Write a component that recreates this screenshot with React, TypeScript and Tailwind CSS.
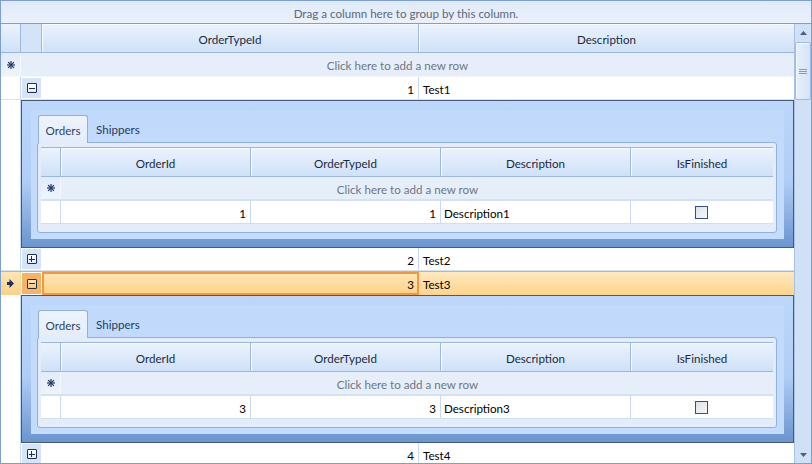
import React from "react";

const FONT = { fontFamily: 'Lato, "Noto Sans", sans-serif' };

function Star() {
  return (
    <svg width="8" height="8" viewBox="0 0 8 8">
      <g stroke="#1f3a6b" strokeWidth="1.2" strokeLinecap="square">
        <line x1="4" y1="0.5" x2="4" y2="7.5" />
        <line x1="0.5" y1="4" x2="7.5" y2="4" />
        <line x1="1.5" y1="1.5" x2="6.5" y2="6.5" />
        <line x1="6.5" y1="1.5" x2="1.5" y2="6.5" />
      </g>
      <rect x="3" y="3" width="2" height="2" fill="#1f3a6b" />
    </svg>
  );
}

function Arrow() {
  return (
    <svg width="7" height="9" viewBox="0 0 7 9">
      <polygon points="0,3 2.5,3 2.5,0 7,4.5 2.5,9 2.5,6 0,6" fill="#1d3461" />
    </svg>
  );
}

function ExpandBox({ plus, selected }: { plus?: boolean; selected?: boolean }) {
  return (
    <div
      className={
        "w-[10px] h-[10px] border border-[#1e2f52] rounded-[1px] flex items-center justify-center relative " +
        (selected
          ? "bg-[linear-gradient(to_bottom,#fde7b8,#fbc77a)]"
          : "bg-[linear-gradient(to_bottom,#ffffff,#e3ecf8)]")
      }
    >
      <div className="w-[6px] h-[1px] bg-[#1e2f52]" />
      {plus && <div className="absolute w-[1px] h-[6px] bg-[#1e2f52]" />}
    </div>
  );
}

function ExpandCell({ plus, selected }: { plus?: boolean; selected?: boolean }) {
  return (
    <div
      className={
        "w-[21px] h-full shrink-0 flex items-center justify-center border border-white " +
        (selected ? "bg-[#f9b461]" : "bg-[#d5e4f7]")
      }
    >
      <ExpandBox plus={plus} selected={selected} />
    </div>
  );
}

function HeaderCell({
  w,
  children,
  last,
}: {
  w?: string;
  children?: React.ReactNode;
  last?: boolean;
}) {
  return (
    <div
      className={
        (w ? w + " shrink-0 " : "flex-1 ") +
        "h-full flex items-center justify-center pt-[3px] text-[#1b2a40] bg-[linear-gradient(to_bottom,#ebf3fd,#cfe1f8)] shadow-[inset_1px_1px_0_#f7fbff] " +
        (last ? "" : "border-r border-[#9fb9dc]")
      }
    >
      {children}
    </div>
  );
}

function MainRow({
  n,
  text,
  plus,
}: {
  n: number;
  text: string;
  plus?: boolean;
}) {
  return (
    <div className="flex h-[23px] shrink-0 border-b border-[#d3e2f4] bg-white">
      <div className="w-[20px] shrink-0 border-r border-[#c7daf1] bg-white" />
      <ExpandCell plus={plus} />
      <div className="w-[377px] shrink-0 border-r border-[#c7daf1] flex items-center justify-end pr-[4px] pt-[3px] text-black">
        {n}
      </div>
      <div className="flex-1 flex items-center pl-[4px] pt-[3px] text-black">{text}</div>
    </div>
  );
}

function SelectedRow() {
  return (
    <div className="flex h-[24px] shrink-0 border-t border-[#f7a851] bg-[linear-gradient(to_bottom,#fee8bd,#fdd48c)]">
      <div className="w-[20px] shrink-0 border-r border-[#f3d9a8] bg-[linear-gradient(to_bottom,#fde7b6,#fcd086)] flex items-center justify-center">
        <Arrow />
      </div>
      <ExpandCell selected />
      <div className="w-[377px] shrink-0 border-2 border-[#f6963f] flex items-center justify-end pr-[3px] pt-[3px] text-black bg-[linear-gradient(to_bottom,#fee5b3,#fdd38b)]">
        3
      </div>
      <div className="flex-1 flex items-center pl-[4px] pt-[3px] text-black">Test3</div>
    </div>
  );
}

function Checkbox() {
  return (
    <div className="w-[13px] h-[13px] border border-[#34507a] bg-[linear-gradient(135deg,#dde1e8,#f6f7f9)]" />
  );
}

function Detail({ n }: { n: number }) {
  const cols = ["OrderId", "OrderTypeId", "Description", "IsFinished"];
  return (
    <div className="flex h-[148px] shrink-0">
      <div className="w-[20px] shrink-0 border-r border-[#c7daf1] bg-white" />
      <div className="flex-1 border border-[#45597c] bg-[linear-gradient(to_bottom,#bcd7fa,#b0cdf4_55%,#6a95cf)] pt-[9px] pl-[9px] pr-[9px] pb-[8px]">
        <div className="h-full bg-[linear-gradient(to_bottom,#c1dafc,#c4dcfb)] pt-[5px] pl-[6px] pr-[7px] pb-[6px] flex flex-col">
          <div className="flex h-[27px] shrink-0 relative z-10">
            <div className="ml-[1px] w-[50px] h-[28px] border border-b-0 border-[#8fb1e0] rounded-t-[3px] bg-[linear-gradient(to_bottom,#eef4fd,#e3ecf9)] flex items-center justify-center pt-[3px] text-[#2c4468]">
              Orders
            </div>
            <div className="px-[8px] flex items-center pt-[3px] text-[#1f3a62]">Shippers</div>
          </div>
          <div className="h-[91px] shrink-0 border border-[#8fb1e0] rounded-[3px] bg-[#e4ecf9] pt-[4px] px-[3px] pb-[8px]">
            <div className="flex flex-col">
              <div className="flex h-[30px] border-t border-b border-[#9bb7de]">
                <div className="w-[20px] shrink-0 h-full bg-[linear-gradient(to_bottom,#ebf3fd,#cfe1f8)] border-r border-[#9fb9dc]" />
                <HeaderCell w="w-[190px]">{cols[0]}</HeaderCell>
                <HeaderCell w="w-[190px]">{cols[1]}</HeaderCell>
                <HeaderCell w="w-[190px]">{cols[2]}</HeaderCell>
                <HeaderCell last>{cols[3]}</HeaderCell>
              </div>
              <div className="flex h-[24px] border-b-2 border-[#d2e1f4] bg-[#e6eef9] relative">
                <div className="w-[20px] shrink-0 h-full bg-[linear-gradient(to_bottom,#e1ebf9,#eef4fc)] border-r border-[#f4f8fd] flex items-center justify-center">
                  <Star />
                </div>
                <div className="flex-1 flex items-center justify-center pr-[19px] pt-[3px] text-[#6d7785]">
                  Click here to add a new row
                </div>
              </div>
              <div className="flex h-[23px] border-b border-[#cfdff2] bg-white">
                <div className="w-[20px] shrink-0 border-r border-[#c7daf1]" />
                <div className="w-[190px] shrink-0 border-r border-[#c7daf1] flex items-center justify-end pr-[4px] pt-[3px] text-black">
                  {n}
                </div>
                <div className="w-[190px] shrink-0 border-r border-[#c7daf1] flex items-center justify-end pr-[4px] pt-[3px] text-black">
                  {n}
                </div>
                <div className="w-[190px] shrink-0 border-r border-[#c7daf1] flex items-center pl-[3px] pt-[3px] text-black">
                  Description{n}
                </div>
                <div className="flex-1 flex items-center justify-center pr-[1px]">
                  <Checkbox />
                </div>
              </div>
            </div>
          </div>
        </div>
      </div>
    </div>
  );
}

function ScrollBar() {
  return (
    <div className="w-[17px] shrink-0 h-full border-l border-[#a9c1e2] bg-[#d1e1f5] flex flex-col">
      <div className="h-[17px] shrink-0 flex items-center justify-center">
        <svg width="7" height="4" viewBox="0 0 7 4">
          <polygon points="0,4 3.5,0 7,4" fill="#4a5d7f" />
        </svg>
      </div>
      <div className="mt-[1px] h-[58px] shrink-0 border border-[#9fb9df] rounded-[2px] bg-[linear-gradient(to_right,#e6effb,#d5e4f7)] shadow-[inset_1px_1px_0_#f3f8fe] flex flex-col items-center justify-center gap-[1px]">
        <div className="w-[8px] h-[1px] bg-[#7f9bd0]" />
        <div className="w-[8px] h-[1px] bg-[#7f9bd0]" />
        <div className="w-[8px] h-[1px] bg-[#7f9bd0]" />
      </div>
      <div className="flex-1" />
      <div className="h-[17px] shrink-0 flex items-center justify-center">
        <svg width="7" height="4" viewBox="0 0 7 4">
          <polygon points="0,0 7,0 3.5,4" fill="#4a5d7f" />
        </svg>
      </div>
    </div>
  );
}

export default function App() {
  return (
    <div
      className="w-[812px] h-[464px] border border-[#7c9fd3] bg-white flex flex-col overflow-hidden text-[11.6px] leading-none"
      style={FONT}
    >
      <div className="h-[23px] shrink-0 border-b border-[#7c9fd3] bg-[linear-gradient(to_bottom,#e0eaf8,#eaf1fb)] flex items-center justify-center pt-[3px] text-[#5b6980]">
        Drag a column here to group by this column.
      </div>
      <div className="flex flex-1 min-h-0">
        <div className="flex-1 flex flex-col min-w-0 overflow-hidden">
          <div className="flex h-[29px] shrink-0 border-b border-[#9bb6dc]">
            <div className="w-[20px] shrink-0 h-full bg-[linear-gradient(to_bottom,#ebf3fd,#cfe1f8)] border-r border-[#9fb9dc]" />
            <div className="w-[21px] shrink-0 h-full bg-[#d4e4f8] border-r border-[#9fb9dc]" />
            <HeaderCell w="w-[377px]">OrderTypeId</HeaderCell>
            <HeaderCell last>Description</HeaderCell>
          </div>
          <div className="flex h-[24px] shrink-0 border-b border-[#f4f8fd] bg-[#e6eef9]">
            <div className="w-[20px] shrink-0 h-full bg-[linear-gradient(to_bottom,#e1ebf9,#eef4fc)] border-r border-[#f4f8fd] flex items-center justify-center">
              <Star />
            </div>
            <div className="flex-1 flex items-center justify-center pr-[20px] pt-[3px] text-[#6d7785]">
              Click here to add a new row
            </div>
          </div>
          <MainRow n={1} text="Test1" />
          <Detail n={1} />
          <MainRow n={2} text="Test2" plus />
          <SelectedRow />
          <Detail n={3} />
          <MainRow n={4} text="Test4" plus />
        </div>
        <ScrollBar />
      </div>
    </div>
  );
}
